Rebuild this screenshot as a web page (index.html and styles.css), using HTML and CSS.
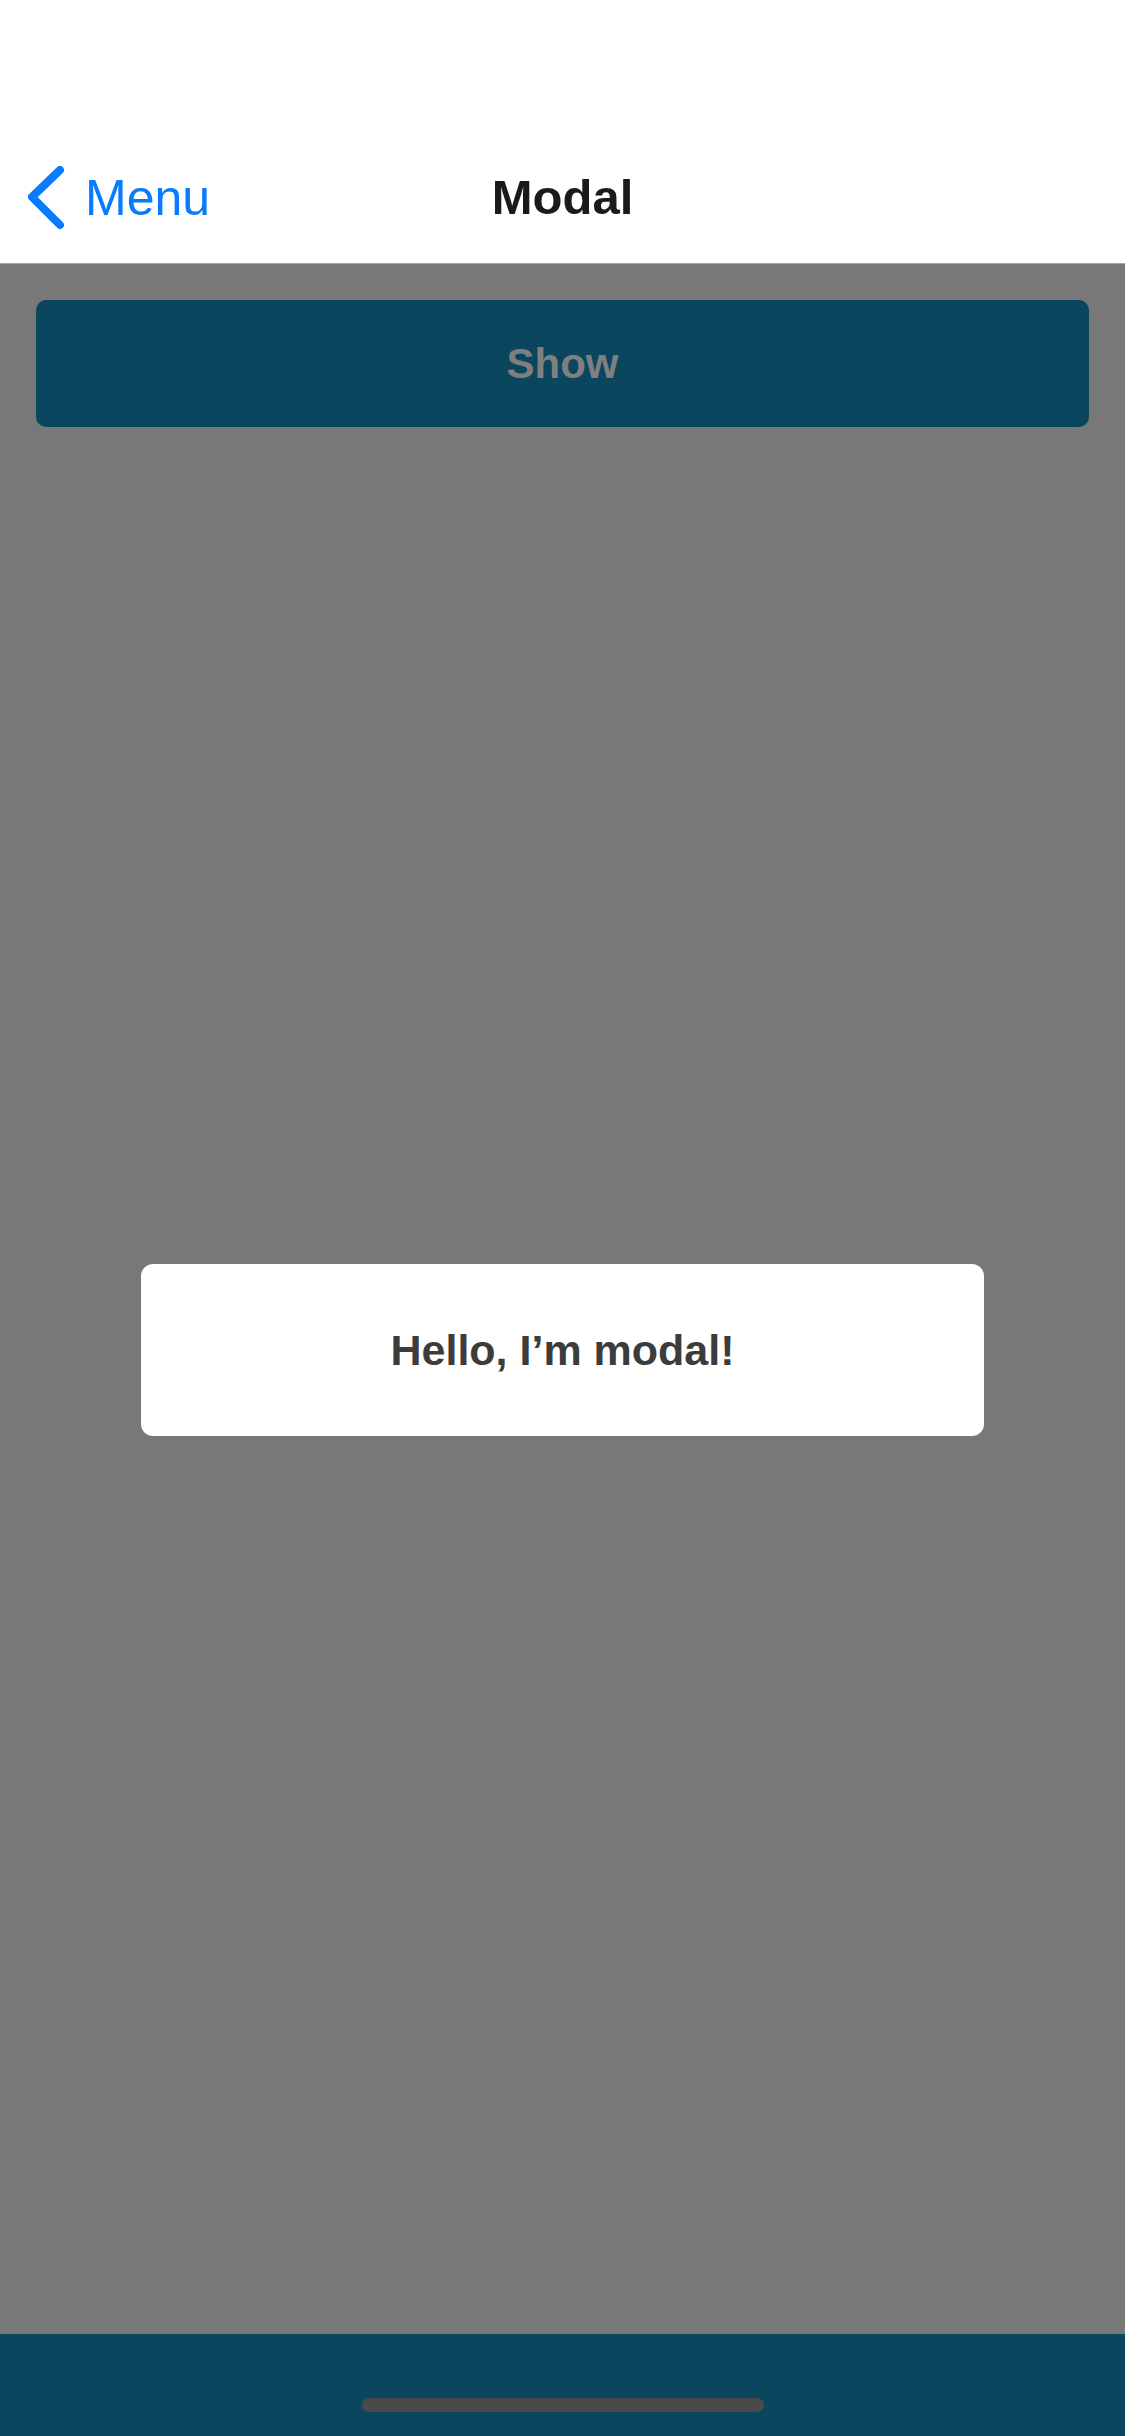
FILE: index.html
```html
<!DOCTYPE html>
<html>
<head>
<meta charset="utf-8">
<link rel="stylesheet" href="styles.css">
</head>
<body>
<div class="screen">
  <header class="header">
    <div class="status"></div>
    <nav class="nav">
      <div class="back">
        <svg class="chev" width="40" height="66" viewBox="0 0 40 66">
          <polyline points="32,4 4,31 32,59" fill="none" stroke="#0a7aff" stroke-width="8" stroke-linecap="round" stroke-linejoin="round"/>
        </svg>
        <span class="back-label">Menu</span>
      </div>
      <div class="title">Modal</div>
      <div class="spacer"></div>
    </nav>
  </header>
  <main class="content">
    <button class="show-btn">Show</button>
    <div class="modal">Hello, I’m modal!</div>
  </main>
  <footer class="bottom">
    <div class="home"></div>
  </footer>
</div>
</body>
</html>
```
FILE: styles.css
```css
html, body {
  margin: 0;
  padding: 0;
}
body {
  width: 1125px;
  height: 2436px;
  font-family: "Liberation Sans", Arial, sans-serif;
  background: #ffffff;
}
.screen {
  display: flex;
  flex-direction: column;
  width: 1125px;
  height: 2436px;
}
.header {
  background: #ffffff;
  height: 264px;
  box-sizing: border-box;
  border-bottom: 1px solid #a3a3a3;
  display: flex;
  flex-direction: column;
}
.status {
  height: 132px;
}
.nav {
  flex: 1;
  display: grid;
  grid-template-columns: 1fr auto 1fr;
  align-items: center;
}
.back {
  display: flex;
  align-items: center;
  padding-left: 28px;
  gap: 17px;
  color: #0a7aff;
}
.chev {
  display: block;
  margin-top: 2px;
}
.back-label {
  font-size: 50px;
  line-height: 1;
}
.title {
  font-size: 49px;
  font-weight: 700;
  color: #1a1a1a;
  line-height: 1;
}
.content {
  flex: 1;
  background: #787878;
  padding: 36px 36px 0;
  display: flex;
  flex-direction: column;
  align-items: center;
}
.show-btn {
  width: 100%;
  height: 127px;
  border: none;
  border-radius: 10px;
  background: #0b465f;
  color: #7f7f7f;
  font-family: "Liberation Sans", Arial, sans-serif;
  font-weight: 700;
  font-size: 42px;
  padding: 0;
}
.modal {
  margin-top: 837px;
  width: 843px;
  height: 172px;
  background: #ffffff;
  border-radius: 12px;
  display: flex;
  align-items: center;
  justify-content: center;
  font-size: 43px;
  font-weight: 700;
  color: #3c3c3c;
}
.bottom {
  height: 102px;
  background: #0b465f;
  display: flex;
  justify-content: center;
  align-items: flex-start;
}
.home {
  margin-top: 64px;
  width: 402px;
  height: 14px;
  border-radius: 7px;
  background: #4a4a4a;
}
```
